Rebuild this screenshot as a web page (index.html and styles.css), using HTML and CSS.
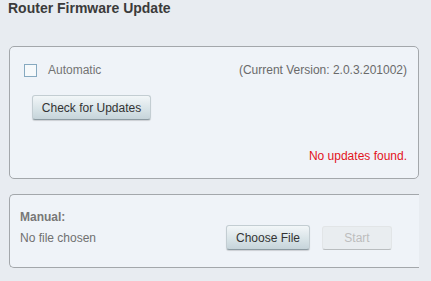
FILE: index.html
```html
<!DOCTYPE html>
<html lang="en">
<head>
  <meta charset="UTF-8">
  <title>Router Firmware Update</title>
  <link rel="stylesheet" href="styles.css">
</head>
<body>
  <h1 class="title">Router Firmware Update</h1>

  <div class="panel auto-panel">
    <div class="auto-row">
      <label class="auto-label"><span class="checkbox"></span>Automatic</label>
      <span class="version">(Current Version: 2.0.3.201002)</span>
    </div>
    <button class="button check-button">Check for Updates</button>
    <div class="status">No updates found.</div>
  </div>

  <div class="panel manual-panel">
    <div class="manual-info">
      <div class="manual-title">Manual:</div>
      <div class="file-name">No file chosen</div>
    </div>
    <div class="manual-actions">
      <button class="button choose-button">Choose File</button>
      <button class="button start-button" disabled>Start</button>
    </div>
  </div>
</body>
</html>
```

FILE: styles.css
```css
body {
  margin: 0;
  padding: 0 0 0 9px;
  background-color: #e8ecf1;
  font-family: "Liberation Sans", Arial, sans-serif;
  font-size: 12px;
  color: #666;
}
.title {
  margin: 0 0 0 -1px;
  font-size: 14px;
  line-height: 17px;
  color: #3b3b3b;
}
.panel {
  box-sizing: border-box;
  width: 410px;
  background-color: #eff3f8;
  border: 1px solid #a3a7ab;
  border-radius: 5px;
}
.auto-panel {
  margin-top: 29px;
  height: 133px;
  padding: 16px 11px 0 14px;
}
.auto-row {
  display: flex;
  justify-content: space-between;
  align-items: center;
  height: 14px;
}
.auto-label {
  display: flex;
  align-items: center;
  color: #737373;
}
.checkbox {
  box-sizing: border-box;
  width: 13px;
  height: 13px;
  border: 1px solid #86a9c0;
  background-color: #f6f9fb;
  margin-right: 11px;
}
.version {
  color: #6a6a6a;
}
.button {
  box-sizing: border-box;
  height: 25px;
  font-family: "Liberation Sans", Arial, sans-serif;
  font-size: 12px;
  color: #333;
  background: linear-gradient(#f2f6f8, #d9e4e8 55%, #c6d4da);
  border: 1px solid #c3cdd2;
  border-bottom-color: #8c9aa1;
  border-radius: 3px;
  box-shadow: 0 1px 1px rgba(0, 0, 0, 0.15);
  padding: 0;
}
.check-button {
  display: block;
  width: 119px;
  margin: 18px 0 0 8px;
}
.status {
  margin-top: 29px;
  text-align: right;
  color: #e3141c;
  line-height: 14px;
}
.manual-panel {
  margin-top: 15px;
  height: 74px;
  padding: 0 0 0 10px;
  border-right: none;
  border-radius: 5px 0 0 5px;
  display: flex;
  align-items: flex-start;
}
.manual-info {
  width: 206px;
  padding-top: 15px;
}
.manual-title {
  font-weight: bold;
  color: #777;
  line-height: 14px;
}
.file-name {
  margin-top: 7px;
  line-height: 14px;
  color: #707070;
}
.manual-actions {
  display: flex;
  gap: 12px;
  padding-top: 30px;
}
.choose-button {
  width: 84px;
}
.start-button {
  width: 70px;
  height: 24px;
  margin-top: 1px;
  color: #bdbdbd;
  background: #e9edf0;
  border-color: #e2e5e7;
  border-bottom-color: #b9bdbf;
  box-shadow: none;
}
```
